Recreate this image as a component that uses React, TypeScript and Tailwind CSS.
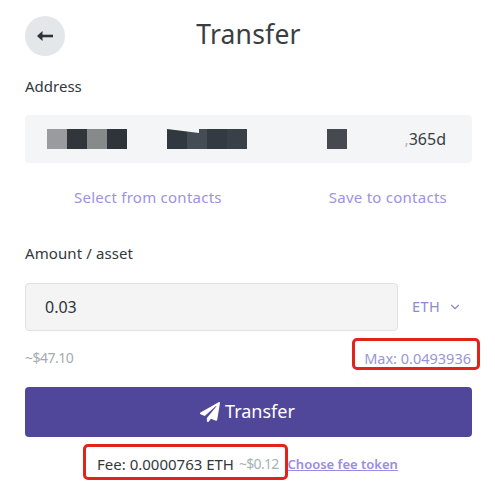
import { ChevronDown } from "lucide-react";
import { FaPaperPlane } from "react-icons/fa";

const font = "font-['Noto_Sans',sans-serif]";

function Mosaic({ colors }: { colors: string[] }) {
  return (
    <div className="flex">
      {colors.map((c, i) => (
        <div key={i} className={`h-5 w-5 ${c}`} />
      ))}
    </div>
  );
}

export default function App() {
  return (
    <div className={`relative h-[497px] w-[495px] overflow-hidden bg-white pl-[25px] pr-[23px] pt-4 ${font} text-[#33383d]`}>
      <header className="relative flex h-10 items-center justify-center">
        <button className="absolute left-0 top-0 flex h-10 w-10 items-center justify-center rounded-full bg-[#e3e7e9]">
          <svg width="18" height="12" viewBox="0 0 18 12" className="text-[#2f3337]">
            <path d="M17 6H3" stroke="currentColor" strokeWidth="2.6" />
            <path d="M6.5 1 1 6l5.5 5V1Z" fill="currentColor" />
          </svg>
        </button>
        <h1 className="-mt-1 text-[26.5px] leading-9 tracking-[0.2px] text-[#3a3e42]">Transfer</h1>
      </header>

      <div className="mt-5 text-[15px] leading-5">Address</div>

      <div className="mt-[19px] flex h-12 items-center rounded-[4px] bg-[#f4f5f6] pl-[22px] pr-[26px]">
        <Mosaic colors={["bg-[#9a9b9f]", "bg-[#31363c]", "bg-[#868a8a]", "bg-[#2f343b]"]} />
        <div className="ml-10">
          <div className="relative">
            <Mosaic colors={["bg-[#31383f]", "bg-[#454c53]", "bg-[#333a41]", "bg-[#3a4047]"]} />
            <div className="absolute left-0 top-0 h-[4px] w-[32px] bg-[#f4f5f6] [clip-path:polygon(0_0,100%_0,100%_100%)]" />
          </div>
        </div>
        <div className="ml-20 h-5 w-5 bg-[#464a50]" />
        <span className="ml-auto text-[16px] text-[#3a3e42]">
          <span className="text-[#b5b8bb]">,</span>365d
        </span>
      </div>

      <div className="mt-6 flex h-5 items-center pr-[25px] text-[15px] leading-5 tracking-[0.25px] text-[#9d92e2]">
        <span className="ml-[49px]">Select from contacts</span>
        <span className="ml-auto">Save to contacts</span>
      </div>

      <div className="mt-[36px] text-[15px] leading-5 tracking-[0.1px]">Amount / asset</div>

      <div className="mt-5 flex h-12 items-center">
        <div className="flex h-12 w-[373px] items-center rounded-[4px] border border-[#dfe1e3] bg-[#f4f4f5] pl-[19px] text-[16px] text-[#2f3337]">
          0.03
        </div>
        <span className="ml-[14px] text-[14.5px] tracking-[0.5px] text-[#8f8ac9]">ETH</span>
        <ChevronDown size={14} strokeWidth={2} className="ml-[8px] text-[#8f8ac9]" />
      </div>

      <div className="mt-[17px] flex h-5 items-center justify-between text-[14.5px] leading-5">
        <span className="text-[14px] tracking-[-0.5px] text-[#a4abb3]">~$47.10</span>
        <span className="mr-px text-[#9a95d8]">Max: 0.0493936</span>
      </div>

      <button className="mt-[19px] flex h-[50px] w-full items-center justify-center gap-[5px] rounded-[4px] bg-[#51479a] pb-px pr-[2px] text-[18px] text-white">
        <FaPaperPlane size={20} />
        <span>Transfer</span>
      </button>

      <div className="mt-[17px] flex h-5 items-center pl-[72px] text-[15px] leading-5 text-[#33383d]">
        <span>Fee: 0.0000763 ETH</span>
        <span className="ml-[5px] text-[14px] tracking-[-0.7px] text-[#a4b3b3]">~$0.12</span>
        <span className="ml-[9px] text-[13px] font-semibold text-[#9a8be6] underline">Choose fee token</span>
      </div>

      {/* annotation boxes drawn over the screenshot */}
      <div className="absolute left-[352px] top-[338px] h-[32px] w-[128px] rounded-[5px] border-[3px] border-[#e2231a]" />
      <div className="absolute left-[83px] top-[444px] h-[36px] w-[205px] rounded-[5px] border-[3px] border-[#e2231a]" />
    </div>
  );
}
